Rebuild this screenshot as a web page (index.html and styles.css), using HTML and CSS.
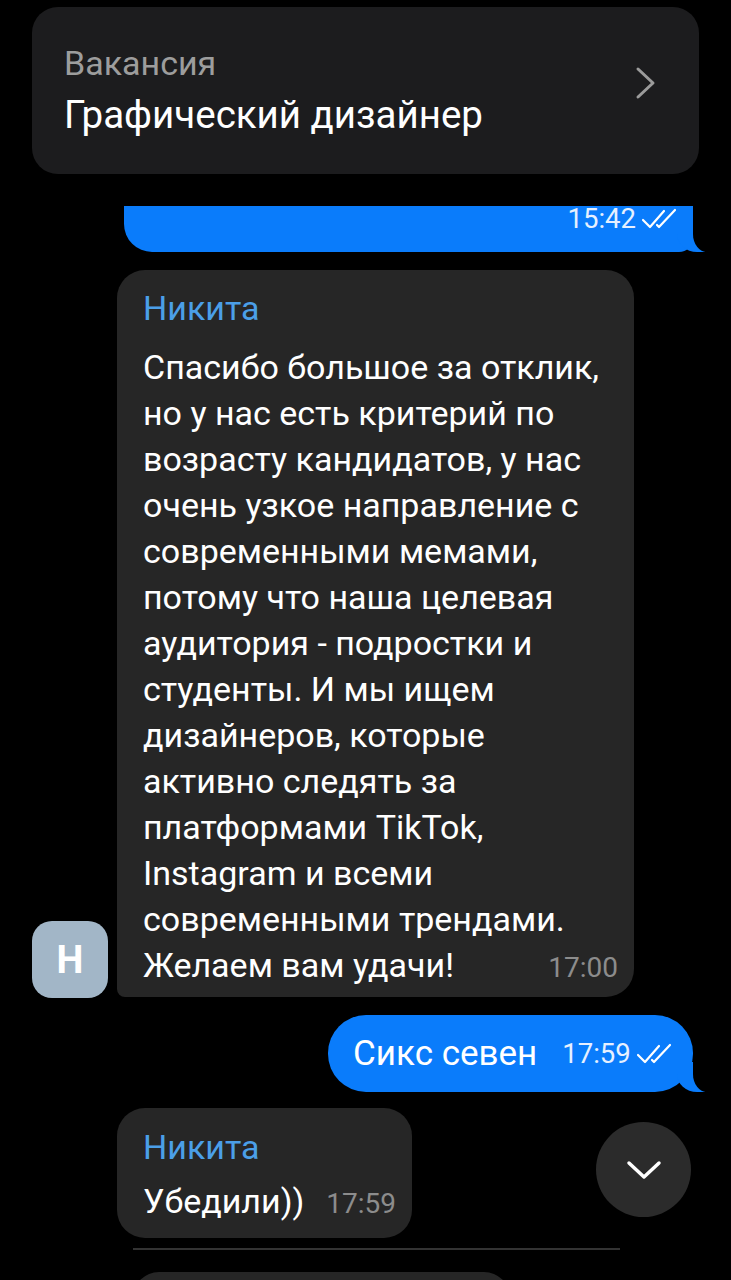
FILE: index.html
```html
<!DOCTYPE html>
<html lang="ru">
<head>
	<meta charset="UTF-8">
	<meta name="viewport" content="width=device-width, initial-scale=1.0">
	<title>Чат</title>
	<link rel="stylesheet" href="styles.css">
</head>
<body>
	<div class="chat">
		<div class="vacancy">
			<div class="vacancy-text">
				<div class="vacancy-label">Вакансия</div>
				<div class="vacancy-title">Графический дизайнер</div>
			</div>
			<svg class="chevron" width="22" height="34" viewBox="0 0 22 34">
				<path d="M3 3 L18 17 L3 31" fill="none" stroke="#9b9b9b" stroke-width="3" stroke-linecap="round" stroke-linejoin="round"/>
			</svg>
		</div>

		<div class="row row-out">
			<div class="bubble-out bubble-cut">
				<span class="time-out">15:42</span>
				<svg class="checks" width="40" height="22" viewBox="0 0 40 22">
					<path d="M2 12 L9 19 L23 3 M16 17 L18 19 L34 2" fill="none" stroke="#fff" stroke-width="2.2" stroke-linecap="round" stroke-linejoin="round"/>
				</svg>
			</div>
		</div>

		<div class="row row-in">
			<div class="avatar">Н</div>
			<div class="bubble-in bubble-big">
				<div class="author">Никита</div>
				<div class="text">
					Спасибо большое за отклик,<br>
					но у нас есть критерий по<br>
					возрасту кандидатов, у нас<br>
					очень узкое направление с<br>
					современными мемами,<br>
					потому что наша целевая<br>
					аудитория - подростки и<br>
					студенты. И мы ищем<br>
					дизайнеров, которые<br>
					активно следять за<br>
					платформами TikTok,<br>
					Instagram и всеми<br>
					современными трендами.
				</div>
				<div class="last-line">
					<span>Желаем вам удачи!</span>
					<span class="time-in">17:00</span>
				</div>
			</div>
		</div>

		<div class="row row-out">
			<div class="bubble-out bubble-short">
				<span class="out-text">Сикс севен</span>
				<span class="time-out">17:59</span>
				<svg class="checks" width="40" height="22" viewBox="0 0 40 22">
					<path d="M2 12 L9 19 L23 3 M16 17 L18 19 L34 2" fill="none" stroke="#fff" stroke-width="2.2" stroke-linecap="round" stroke-linejoin="round"/>
				</svg>
			</div>
		</div>

		<div class="row row-in">
			<div class="avatar-space"></div>
			<div class="bubble-in bubble-small">
				<div class="author">Никита</div>
				<div class="last-line">
					<span>Убедили))</span>
					<span class="time-in">17:59</span>
				</div>
			</div>
		</div>

		<div class="divider"></div>
		<div class="next-bubble"></div>

		<button class="scroll-down">
			<svg width="38" height="24" viewBox="0 0 38 24">
				<path d="M4 5 L19 19 L34 5" fill="none" stroke="#fff" stroke-width="3.5" stroke-linecap="round" stroke-linejoin="round"/>
			</svg>
		</button>
	</div>
</body>
</html>
```

FILE: styles.css
```css
body {
	margin: 0;
	padding: 0;
	background-color: #000;
	font-family: Roboto, "Liberation Sans", sans-serif;
	color: #fff;
	overflow: hidden;
}

.chat {
	position: relative;
	height: 1280px;
	padding-top: 7px;
	box-sizing: border-box;
}

/* vacancy card */
.vacancy {
	margin: 0 32px;
	height: 167px;
	background-color: #1c1c1e;
	border-radius: 26px;
	padding: 0 42px 0 32px;
	display: flex;
	align-items: center;
	justify-content: space-between;
}

.vacancy-label {
	color: #9d9d9d;
	font-size: 34px;
	line-height: 40px;
}

.vacancy-title {
	font-size: 38.5px;
	line-height: 46px;
	margin-top: 9px;
}

.chevron {
	margin-top: -16px;
}

/* rows */
.row {
	display: flex;
}

.row-out {
	justify-content: flex-end;
	padding-right: 38px;
}

.row-in {
	align-items: flex-end;
	padding-left: 32px;
	margin-top: 18px;
}

.bubble-out {
	position: relative;
	background-color: #0a7cfb;
	border-radius: 38px;
	display: flex;
	align-items: center;
	gap: 7px;
	box-sizing: border-box;
}

.bubble-out::before {
	content: "";
	position: absolute;
	right: -12px;
	bottom: 0;
	width: 28px;
	height: 30px;
	background-color: #0a7cfb;
	border-bottom-left-radius: 20px 18px;
}

.bubble-out::after {
	content: "";
	position: absolute;
	right: -26px;
	bottom: 0;
	width: 26px;
	height: 32px;
	background-color: #000;
	border-bottom-left-radius: 14px 18px;
}

.bubble-cut {
	width: 569px;
	height: 46px;
	margin-top: 32px;
	border-radius: 0 0 14px 28px;
	align-items: flex-start;
	justify-content: flex-end;
	padding-right: 12px;
}

.bubble-cut .time-out {
	line-height: 26px;
}

.bubble-cut .checks {
	margin-top: 2px;
}

.bubble-short {
	width: 365px;
	height: 77px;
	margin-top: 18px;
	padding-left: 25px;
}

.out-text {
	font-size: 35px;
	margin-right: 18px;
}

.time-out {
	font-size: 27.5px;
	color: #e6f0ff;
}

.checks {
	margin-left: -2px;
}

/* incoming */
.avatar {
	width: 76px;
	height: 77px;
	border-radius: 20px;
	background-color: #a2b6c7;
	color: #fff;
	font-size: 38px;
	font-weight: bold;
	display: flex;
	align-items: center;
	justify-content: center;
	margin-right: 9px;
	margin-bottom: -1px;
	position: relative;
	z-index: 1;
	box-shadow: 0 0 0 4px #000;
}

.avatar-space {
	width: 85px;
}

.bubble-in {
	position: relative;
	background-color: #262626;
	border-radius: 28px;
	padding: 15px 16px 9px 26px;
	box-sizing: border-box;
}

.bubble-big {
	width: 517px;
	height: 727px;
	border-bottom-left-radius: 8px;
}

.bubble-small {
	width: 295px;
	height: 130px;
	margin-top: -2px;
	padding-top: 16px;
}

.author {
	color: #4b9fe8;
	font-size: 34px;
	line-height: 46px;
	margin-bottom: 13px;
}

.bubble-small .author {
	margin-bottom: 8px;
}

.text {
	font-size: 34px;
	line-height: 46px;
}

.last-line {
	display: flex;
	justify-content: space-between;
	align-items: baseline;
	font-size: 34px;
	line-height: 46px;
}

.time-in {
	font-size: 28px;
	color: #8c8c8c;
	margin-left: 14px;
}

.divider {
	margin: 10px 111px 0 133px;
	height: 2px;
	background-color: #333;
}

.next-bubble {
	margin: 22px 0 0 133px;
	width: 377px;
	height: 40px;
	background-color: #262626;
	border-radius: 26px 26px 0 0;
}

.scroll-down {
	position: absolute;
	left: 596px;
	top: 1122px;
	width: 95px;
	height: 95px;
	border-radius: 50%;
	border: none;
	background-color: #2b2b2b;
	display: flex;
	align-items: center;
	justify-content: center;
	padding: 0;
}
```
